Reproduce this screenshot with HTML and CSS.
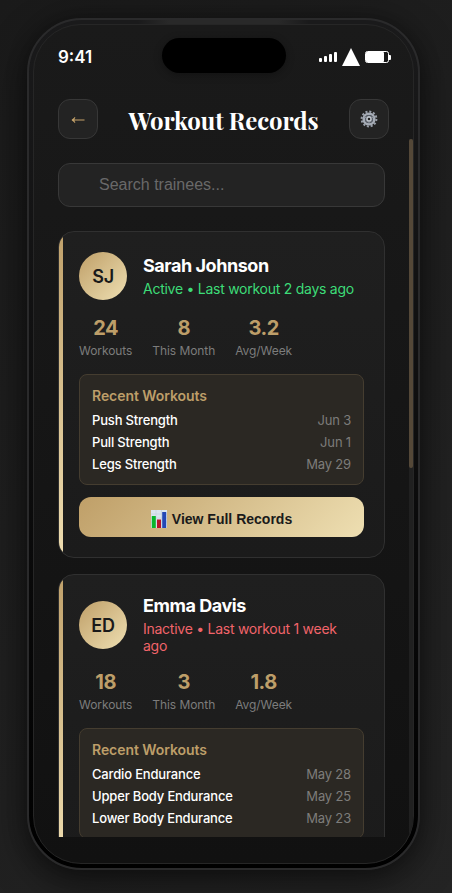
FILE: index.html
```html
<!DOCTYPE html>
<html lang="en">
<head>
<meta charset="utf-8">
<title>Workout Records</title>
<link rel="stylesheet" href="styles.css">
</head>
<body>
<div class="phone">
  <div class="screen">
    <div class="island"></div>
    <div class="status">
      <span class="time">9:41</span>
      <svg class="indicators" width="74" height="20" viewBox="0 0 74 20" fill="#fff">
        <rect x="0" y="10" width="3" height="4" rx="1"/><rect x="5" y="8" width="3" height="6" rx="1"/><rect x="10" y="6" width="3" height="8" rx="1"/><rect x="15" y="4" width="3" height="10" rx="1"/>
        <path d="M32 0L41 18H23Z"/>
        <rect x="46.5" y="3.5" width="23" height="11" rx="2" fill="none" stroke="#fff"/>
        <rect x="47" y="4" width="18" height="10" rx="1"/><path d="M70 7h1a1 1 0 0 1 1 1v3a1 1 0 0 1-1 1h-1z"/>
      </svg>
    </div>
    <header class="header">
      <button class="icon-btn" aria-label="Back"><svg class="back" width="16" height="12" viewBox="0 0 16 12" fill="none" stroke="#c5a26a" stroke-width="1.1"><path d="M14.500 6H2"/><path d="M5 3.200L1.800 6L5 8.800L4 6Z" fill="#c5a26a" stroke-width=".5"/></svg></button>
      <h1 class="title">Workout Records</h1>
      <button class="icon-btn" aria-label="Settings"><svg class="gear" width="18" height="18" viewBox="-9 -9 18 18" fill="none">
        <circle r="7.400" stroke="#979da7" stroke-width="2" stroke-dasharray="2.100 1.775"/>
        <circle r="5.300" stroke="#a5abb5" stroke-width="2.600"/>
        <circle r="3.500" stroke="#59606b" stroke-width="1.200"/>
        <circle r="2.100" stroke="#c0c6ce" stroke-width="1.600"/>
        <path d="M-5-2L-2-1M5-2L2-1M0 5V2" stroke="#8c929b"/>
      </svg></button>
    </header>
    <main class="content">
      <div class="search">Search trainees...</div>
      <article class="card">
        <div class="person">
          <div class="avatar">SJ</div>
          <div class="info"><h2 class="name">Sarah Johnson</h2><p class="state active">Active • Last workout 2 days ago</p></div>
        </div>
        <div class="stats">
          <div class="stat"><b class="num">24</b><span class="label">Workouts</span></div>
          <div class="stat"><b class="num">8</b><span class="label">This Month</span></div>
          <div class="stat"><b class="num">3.2</b><span class="label">Avg/Week</span></div>
        </div>
        <section class="recent">
          <h3 class="recent-title">Recent Workouts</h3>
          <div class="row"><span>Push Strength</span><span class="date">Jun 3</span></div>
          <div class="row"><span>Pull Strength</span><span class="date">Jun 1</span></div>
          <div class="row"><span>Legs Strength</span><span class="date">May 29</span></div>
        </section>
        <button class="view"><svg width="16" height="18" viewBox="0 0 16 18"><path fill="#dbe5ef" d="M0 0h16v18H0z"/><path stroke="#b9c9d8" stroke-width=".5" d="M0 4h16M0 8h16M0 12h16M5 0v18M10.500 0v18"/><path fill="#08b52c" d="M.8 6h4v12h-4z"/><path fill="#b9152b" d="M6 9.500h4V18H6z"/><path fill="#2448b5" d="M11.200 2h4v16h-4z"/></svg><span>View Full Records</span></button>
      </article>
      <article class="card">
        <div class="person">
          <div class="avatar">ED</div>
          <div class="info"><h2 class="name">Emma Davis</h2><p class="state inactive">Inactive • Last workout 1 week ago</p></div>
        </div>
        <div class="stats">
          <div class="stat"><b class="num">18</b><span class="label">Workouts</span></div>
          <div class="stat"><b class="num">3</b><span class="label">This Month</span></div>
          <div class="stat"><b class="num">1.8</b><span class="label">Avg/Week</span></div>
        </div>
        <section class="recent">
          <h3 class="recent-title">Recent Workouts</h3>
          <div class="row"><span>Cardio Endurance</span><span class="date">May 28</span></div>
          <div class="row"><span>Upper Body Endurance</span><span class="date">May 25</span></div>
          <div class="row"><span>Lower Body Endurance</span><span class="date">May 23</span></div>
        </section>
      </article>
    </main>
    <div class="track"><div class="thumb"></div></div>
  </div>
</div>
</body>
</html>
```

FILE: styles.css
```css
* { box-sizing: border-box; }
body {
  margin: 0; height: 893px; overflow: hidden; padding: 18px 0 0 27px;
  background: linear-gradient(135deg, #1a1a1a, #242424);
  font-family: Inter, "Liberation Sans", sans-serif; color: #fff;
}
h1, h2, h3, p { margin: 0; }
button { font: inherit; padding: 0; }
svg { display: block; flex: none; }
.phone {
  width: 393px; height: 852px; padding: 4px; border: 2px solid #2a2a2b; border-radius: 55px;
  background: linear-gradient(90deg, transparent 28%, #292929 36% 64%, transparent 72%) top / 100% 4px no-repeat,
    linear-gradient(180deg, #1a1a1b, #000);
  box-shadow: 0 12px 36px rgba(0,0,0,.5), 0 0 20px rgba(0,0,0,.25);
}
.screen {
  position: relative; height: 840px; overflow: hidden; border: 1px solid #262626; border-radius: 48px;
  background: linear-gradient(180deg, #1a1a1a, #111);
}
.island {
  position: absolute; left: 128px; top: 13px; width: 124px; height: 35px; border-radius: 18px;
  background: #000; box-shadow: 0 2px 8px rgba(0,0,0,.3);
}
.status { height: 74px; padding: 22px 24px 0; display: flex; justify-content: space-between; }
.time { font-size: 17px; line-height: 20px; font-weight: 600; }
.indicators { margin: 1px -4px 0 0; }
.header { height: 40px; padding: 0 24px; display: flex; align-items: center; justify-content: space-between; }
.icon-btn {
  width: 40px; height: 40px; border: 1px solid #373737; border-radius: 12px; background: #232323;
  display: flex; align-items: center; justify-content: center;
}
.back { margin-top: 2px; }
.gear { margin-left: 1px; }
.title { font: 700 24px/40px "Playfair Display", "Liberation Serif", serif; letter-spacing: -.12px; white-space: nowrap; padding-top: 2px; }
.content { height: 698px; overflow: hidden; padding: 24px 28px 0 24px; }
.search {
  height: 44px; border: 1px solid #383838; border-radius: 12px; background: #232323; padding-left: 40px;
  font: 16px/42px "Liberation Sans", sans-serif; color: #696969;
}
.card {
  position: relative; margin-top: 24px; padding: 20px; border: 1px solid #303030; border-radius: 16px;
  background: linear-gradient(180deg, #1f1f1f, #1b1b1b); overflow: hidden;
}
.card + .card { margin-top: 16px; }
.card::before { content: ""; position: absolute; left: 0; top: 0; bottom: 0; width: 4px; background: linear-gradient(#c0a16b, #eeddb0); }
.person { display: flex; align-items: center; gap: 16px; }
.avatar {
  width: 48px; height: 48px; flex: none; border-radius: 50%; background: linear-gradient(135deg, #bf9f68, #eedfb2);
  color: #1a1a1a; font-size: 18px; line-height: 49px; font-weight: 600; text-align: center; letter-spacing: -.3px;
}
.info { flex: 1; }
.name { font-size: 18px; line-height: 22px; font-weight: 650; letter-spacing: -.45px; margin-bottom: 3px; }
.state { font-size: 14px; line-height: 17px; letter-spacing: -.26px; }
.active { color: #3ddc78; }
.inactive { color: #f1646a; }
.stats { display: flex; gap: 20px; margin-top: 16px; }
.stat { text-align: center; display: flex; flex-direction: column; }
.num { font-size: 20px; line-height: 24px; font-weight: 650; letter-spacing: -.4px; color: #bd9e69; }
.label { font-size: 12px; line-height: 15px; margin-top: 3px; letter-spacing: -.07px; color: #7c7c7c; }
.recent { margin-top: 16px; height: 111px; padding: 12px; border: 1px solid #453d30; border-radius: 8px; background: #2b2823; }
.recent-title { font-size: 14px; line-height: 17px; font-weight: 600; letter-spacing: -.07px; color: #bd9e69; margin-bottom: 5px; }
.row { display: flex; justify-content: space-between; font-size: 13px; line-height: 22px; font-weight: 450; letter-spacing: -.17px; }
.date { color: #7d7c7a; font-weight: 400; }
.view {
  margin-top: 12px; width: 100%; height: 40px; border: 0; border-radius: 12px; color: #1a1a1a;
  background: linear-gradient(135deg, #bf9f68, #eedfb2); font: 700 14px "Liberation Sans", sans-serif;
  display: flex; align-items: center; justify-content: center; gap: 5px; padding-top: 3px;
}
.track { position: absolute; right: 0; top: 114px; bottom: 0; width: 4px; background: #202020; }
.thumb { height: 329px; border-radius: 2px; background: #544838; }
```
